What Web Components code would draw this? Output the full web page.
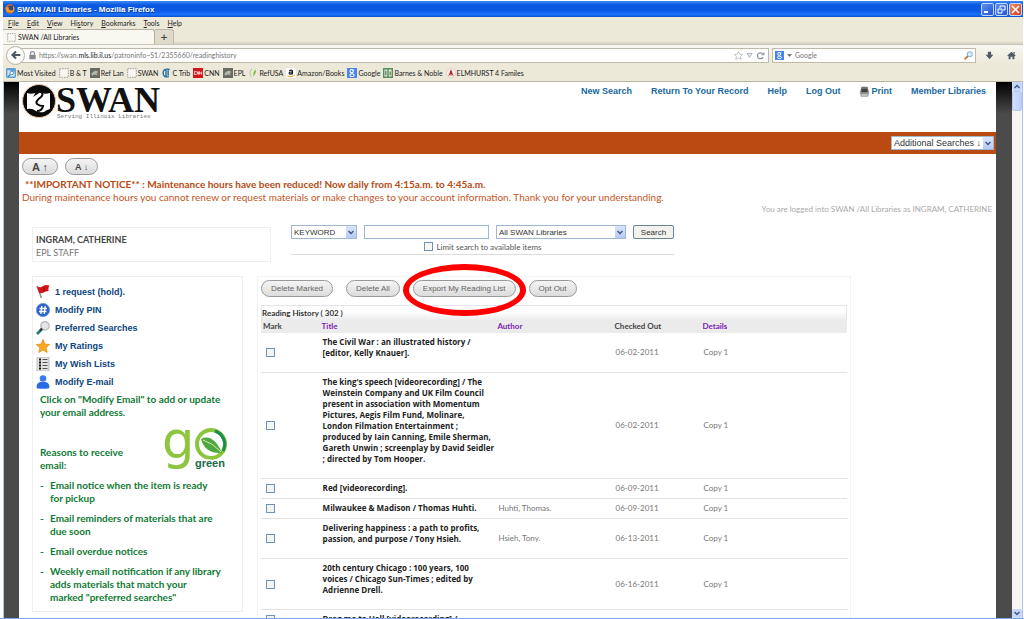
<!DOCTYPE html>
<html lang="en">
<head>
<meta charset="utf-8">
<title>SWAN /All Libraries</title>
<style>
  html, body { height: 100%; }
  body {
    margin: 0;
    overflow: hidden;
    background: #fff;
    font-family: Lato, "Noto Sans", sans-serif;
    font-size: 9px;
  }
</style>
</head>
<body>
<browser-window>
  <catalog-page></catalog-page>
</browser-window>

<script>
/* every element below only fills its shadow root from render() */
class BaseElement extends HTMLElement {
  constructor() {
    super();
    this.attachShadow({ mode: "open" });
  }

  connectedCallback() {
    this.shadowRoot.innerHTML = this.render();
  }
}

/* ================= ICONS ================= */
const dotted = `<rect x="1" y="1" width="12" height="12" fill="#f8f7f2" stroke="#777" stroke-dasharray="2 1.5"/>`;
const photo = `<rect width="14" height="14" fill="#686b62"/><path d="M2 8q5-7 10-2l-3 1 2 3-5-1-3 2z" fill="#b5b8ae"/>`;

const ICONS = {
  firefox: `<circle cx="7" cy="7" r="6.5" fill="#e66a13"/><circle cx="8" cy="6" r="4" fill="#34427f"/><path d="M1 4l2 1 3 0-1 2 3 2 3-1-2 4-6-1-2-4z" fill="#f59a22"/><path d="M12 4q2 5-3 8" stroke="#ffcf4a" fill="none"/>`,
  page: dotted,
  photo: photo,
  folder: `<rect width="14" height="14" rx="2" fill="#5e9fd4"/><path d="M2 3h4l1 2h5v7H2z" fill="#cfe6f7"/><circle cx="8" cy="7" r="2.5" fill="#fff" stroke="#2b6ca8"/><path d="M6 9l-3 3" stroke="#2b6ca8" stroke-width="1.5"/>`,
  trib: `<path d="M12 2Q3 0 3 7t8 5M7 1v12M10 3v8" stroke="#1f6fa8" stroke-width="2" fill="none"/>`,
  cnn: `<rect width="14" height="14" fill="#d3161b"/><path d="M5 5H2v4h3M6 9V5l2 4V5M9 9V5l3 4V5" stroke="#fff" fill="none"/>`,
  refusa: `<path d="M6 1Q0 6 5 13" stroke="#c2c6bb" stroke-width="1.5" fill="none"/><path d="M10 2q3 4-3 10l1-6z" fill="#7fbd3c"/>`,
  amazon: `<rect width="14" height="14" rx="2" fill="#fff"/><path d="M4.500 4q3-2 4.500 0v5M9 5.500q-5 0-4.500 2t4.500 0" stroke="#222" stroke-width="1.800" fill="none"/><path d="M2 11q5 3 10-1" stroke="#f29a1f" stroke-width="1.500" fill="none"/>`,
  google: `<rect width="14" height="14" fill="#4a83f0"/><circle cx="6.500" cy="4.500" r="2.300" fill="none" stroke="#fff" stroke-width="1.500"/><ellipse cx="7" cy="10" rx="3" ry="2" fill="none" stroke="#fff" stroke-width="1.500"/><path d="M7 3h3" stroke="#fff"/>`,
  noble: `<rect width="14" height="14" fill="#5c8a5d"/><path d="M2 2h4v10H2zM8 2h4v10H8z" fill="#e8efe4"/><path d="M4 4v6M10 5v5" stroke="#3d6b41" stroke-width="1.500"/>`,
  elmhurst: `<circle cx="7" cy="7" r="6.500" fill="#f6efe9" stroke="#ddc8c4"/><path d="M3 12L7 2l4 10-4-4z" fill="#c1272d"/><path d="M7 3v8" stroke="#8b1519"/>`,
  back: `<path d="M7 2L2 7l5 5M2.500 7H13" stroke="#4d5560" stroke-width="2.800" fill="none"/>`,
  lock: `<rect x="2" y="6" width="10" height="7" rx="1" fill="#8a8a8a"/><path d="M4 6V4q0-3 3-3t3 3v2" stroke="#8a8a8a" stroke-width="1.800" fill="none"/>`,
  star: `<path d="M7 1l2 4 4.500.5-3.300 3 1 4.500L7 10.800 2.800 13l1-4.500L.5 5.500 5 5z" fill="#fff" stroke="#a5a5a5"/>`,
  caret: `<path d="M3 4h8L7 10z" fill="#e7ebee" stroke="#8d99a5"/>`,
  smallcaret: `<path d="M3 5h8l-4 4z" fill="#666"/>`,
  reload: `<path d="M11 9.500A4.600 4.600 0 1 1 10 4" stroke="#8c96a0" stroke-width="2" fill="none"/><path d="M8 6.500h5v-5z" fill="#8c96a0"/>`,
  find: `<circle cx="9" cy="5" r="4" fill="#d9effb" stroke="#6d9cc4" stroke-width="1.300"/><path d="M6 8l-5 5" stroke="#b36f41" stroke-width="2.400"/>`,
  download: `<path d="M4.500 1h5v5H13l-6 7-6-7h3.500z" fill="#515a64"/>`,
  home: `<path d="M7 1l6.500 6-1 1-1-.7V13H8.500V9h-3v4h-3V7.300l-1 .7-1-1zM10 1.500h2V5l-2-2z" fill="#515a64"/>`,
  printer: `<path d="M3 1h8l1 5H2z" fill="#6f7471"/><rect x="1" y="5" width="12" height="6" rx="2" fill="#9b9f9c"/><path d="M3 4h8v4H3z" fill="#3e4340"/><path d="M2.500 10h9v3h-9z" fill="#d4d6d4" stroke="#888"/>`,
  flag: `<path d="M1 1l4.500 12" stroke="#8d8d8d" stroke-width="1.500"/><path d="M1 1.500q4 1.500 6-.3t6.500-.7q-1.500 2-1 5.500-3 0-5 1.500T3 7.500z" fill="#d2161a"/><path d="M7 1.300l2 4.500" stroke="#8f0c10"/>`,
  hash: `<circle cx="7" cy="7" r="6.600" fill="#2a62cc" stroke="#6f9ae0"/><path d="M5.800 3l-1 8M9.200 3l-1 8M3.500 5.500h7.500M3 8.500h7.500" stroke="#fff" stroke-width="1.300"/>`,
  lens: `<circle cx="9" cy="4.800" r="4.200" fill="#e3e6e8" stroke="#b4b4b4" stroke-width="1.200"/><path d="M6 8l-5 5" stroke="#23797c" stroke-width="2.600"/><path d="M6 7.500l-2 2" stroke="#333" stroke-width="2"/>`,
  rating: `<path d="M7 .5l2 4.600 4.700.4-3.500 3.200 1 4.800L7 11l-4.200 2.500 1-4.800L.3 5.500 5 5.100z" fill="#f7a823" stroke="#e98b16" stroke-width=".7"/>`,
  list: `<rect x="1" y="0" width="12" height="14" fill="#e4e4e4" stroke="#bbb"/><path d="M3 2.500h2M3 5.500h2M3 8.500h2M3 11.500h2" stroke="#111" stroke-width="2"/><path d="M6.500 2.500h5M6.500 5.500h5M6.500 8.500h5M6.500 11.500h5" stroke="#555"/>`,
  person: `<circle cx="7" cy="3.500" r="3.300" fill="#3a7bf2"/><path d="M.8 13.300q-1-5.500 4-6.300h4.400q5 .8 4 6.300-6.200 1-12.400 0z" fill="#2c6be6"/>`
};

class UiIcon extends BaseElement {
  render() {
    return `
      <style>
        :host { display: inline-block; flex: none; width: 14px; height: 14px; }
        svg { display: block; width: 100%; height: 100%; }
      </style>
      <svg viewBox="0 0 14 14" aria-hidden="true">${ICONS[this.getAttribute("name")]}</svg>
    `;
  }
}

/* ================= XP STYLE CONTROLS ================= */
class XpSelect extends BaseElement {
  render() {
    return `
      <style>
        :host { display: grid; box-sizing: border-box; height: 14px; border: 1px solid #9db8d2; background: #fff; font-size: 8px; }
        select, .arrow { grid-area: 1 / 1; }
        select {
          appearance: none;
          min-width: 0;
          margin: 0;
          padding: 0 10px 0 2px;
          border: 0;
          background: none;
          color: #333;
          font: inherit;
          font-family: "Liberation Sans", sans-serif;
        }
        .arrow {
          display: grid;
          place-items: center;
          justify-self: end;
          width: 10px;
          background: linear-gradient(#dbe6fd, #b5c9f7);
          pointer-events: none;
        }
      </style>
      <select aria-label="${this.getAttribute("label")}"><option>${this.getAttribute("value")}</option></select>
      <span class="arrow"><svg width="6" height="5" viewBox="0 0 6 5"><path d="M.5 1L3 3.500 5.500 1" stroke="#44597f" stroke-width="1.500" fill="none"/></svg></span>
    `;
  }
}

class PillButton extends BaseElement {
  render() {
    return `
      <style>
        :host { display: inline-block; font-size: 8px; }
        button {
          display: block;
          height: 17px;
          padding: 0 9px;
          border: 1px solid #999;
          border-radius: 9px;
          background: linear-gradient(#f4f4f4, #dcdcdc);
          color: #666;
          font: inherit;
          font-family: "Liberation Sans", sans-serif;
          white-space: nowrap;
        }
        :host([bold]) button { color: #444; font-weight: bold; }
      </style>
      <button type="button"><slot></slot></button>
    `;
  }
}

/* red ellipse drawn over whatever is slotted */
class RedRing extends BaseElement {
  render() {
    return `
      <style>
        :host { display: block; position: relative; }
        .ring {
          position: absolute;
          inset: -16px -10px -19px;
          border: 6px solid #fe0000;
          border-radius: 50%;
          pointer-events: none;
        }
      </style>
      <slot></slot>
      <div class="ring"></div>
    `;
  }
}

/* ================= BROWSER CHROME ================= */
class BrowserWindow extends BaseElement {
  render() {
    return `
      <style>
        :host {
          display: flex;
          flex-direction: column;
          box-sizing: border-box;
          height: 100vh;
          padding: 1px 1px 0 3px;
          border-bottom: 1px solid #7ba7ee;
        }
        .view { display: flex; flex: 1; min-height: 0; border-left: 1px solid #a9c4ee; border-right: 1px solid #a9c4ee; }
        .page { flex: 1; min-width: 0; overflow: hidden; }
      </style>
      <title-bar></title-bar>
      <menu-bar></menu-bar>
      <tab-strip></tab-strip>
      <nav-bar></nav-bar>
      <bookmark-bar></bookmark-bar>
      <div class="view">
        <div class="page"><slot></slot></div>
        <scroll-rail></scroll-rail>
      </div>
    `;
  }
}

class TitleBar extends BaseElement {
  render() {
    return `
      <style>
        :host {
          display: flex;
          align-items: center;
          height: 16px;
          padding: 0 1px 0 2px;
          background: linear-gradient(#3c8af5, #0a58de 25%, #0b5ae8 60%, #1872fb 85%, #0d4fcb);
          color: #fff;
          font: bold 8px "Liberation Sans", sans-serif;
        }
        ui-icon { width: 10px; height: 10px; margin-right: 2px; }
        .title { flex: 1; text-shadow: 1px 1px #0b3b9c; }
        .buttons { display: flex; gap: 1px; }
        button {
          display: grid;
          place-items: center;
          width: 13px;
          height: 13px;
          padding: 0;
          border: 1px solid #c5d7f8;
          border-radius: 2px;
          background: linear-gradient(135deg, #5d8ff0, #2456cf);
        }
        .close { background: linear-gradient(135deg, #ef8a69, #d1401b); }
        svg { width: 9px; height: 9px; fill: none; stroke: #fff; }
      </style>
      <ui-icon name="firefox"></ui-icon>
      <span class="title">SWAN /All Libraries - Mozilla Firefox</span>
      <div class="buttons">
        <button type="button" aria-label="Minimize"><svg viewBox="0 0 9 9"><path d="M1 7h4" stroke-width="2"/></svg></button>
        <button type="button" aria-label="Restore"><svg viewBox="0 0 9 9"><path d="M3 3V1h5v4H6M1 4h4v4H1z"/></svg></button>
        <button type="button" class="close" aria-label="Close"><svg viewBox="0 0 9 9"><path d="M1 1l7 7M8 1L1 8" stroke-width="1.500"/></svg></button>
      </div>
    `;
  }
}

class MenuBar extends BaseElement {
  render() {
    return `
      <style>
        :host { display: flex; gap: 8px; height: 12px; padding-left: 5px; background: #ece9d8; color: #222; font-size: 7px; line-height: 12px; }
      </style>
      ${["File", "Edit", "View", "History", "Bookmarks", "Tools", "Help"].map(this.item).join("")}
    `;
  }

  item(text) {
    // the access key is the first letter, except in History
    const at = text === "History" ? 2 : 0;
    return `<span>${text.slice(0, at)}<u>${text[at]}</u>${text.slice(at + 1)}</span>`;
  }
}

class TabStrip extends BaseElement {
  render() {
    return `
      <style>
        :host { display: flex; box-sizing: border-box; height: 16px; border-bottom: 1px solid #c9c6b8; background: linear-gradient(#ece9d8 80%, #d4d1c1); color: #222; font-size: 7px; }
        .tab { display: flex; align-items: center; gap: 2px; box-sizing: border-box; width: 152px; padding-left: 4px; border: 1px solid #b4b1a3; border-width: 1px 1px 0 0; border-radius: 0 3px 0 0; background: #f8f7f0; }
        ui-icon { width: 9px; height: 9px; }
        button { width: 19px; padding: 0; border: 1px solid #bcb9ab; border-width: 1px 1px 0 0; border-radius: 0 3px 0 0; background: #dedbcc; color: #444; font: bold 9px "DejaVu Sans", sans-serif; }
      </style>
      <div class="tab"><ui-icon name="page"></ui-icon>SWAN /All Libraries</div>
      <button type="button" aria-label="New tab">+</button>
    `;
  }
}

class NavBar extends BaseElement {
  render() {
    return `
      <style>
        :host { display: flex; align-items: center; height: 20px; padding: 0 7px 0 3px; background: linear-gradient(#f8f7f1, #ece9d8); color: #777; font-size: 7px; }
        ui-icon { width: 9px; height: 9px; }
        button { display: grid; place-items: center; padding: 0; border: 0; background: none; }
        .back { z-index: 1; width: 19px; height: 19px; margin-right: -6px; border: 1px solid #b5b3a8; border-radius: 50%; background: #fbfbf8; }
        .back ui-icon { width: 10px; height: 10px; }
        .field { display: flex; align-items: center; box-sizing: border-box; height: 15px; border: 1px solid #bdbaa9; background: #fff; }
        .url { flex: 1; gap: 2px; padding: 0 3px 0 8px; }
        .address { flex: 1; }
        .address b { color: #222; font-weight: normal; }
        .search { gap: 1px; width: 204px; margin: 0 9px 0 3px; padding: 0 2px; }
        .search input { flex: 1; min-width: 0; padding: 0; border: 0; background: none; color: #777; font: inherit; }
        .search input::placeholder { color: #777; }
        .tools { display: flex; gap: 13px; }
      </style>
      <button type="button" class="back" aria-label="Back"><ui-icon name="back"></ui-icon></button>
      <div class="field url">
        <ui-icon name="lock"></ui-icon>
        <span class="address">https://swan.<b>mls.lib.il.us</b>/patroninfo~S1/2355660/readinghistory</span>
        <ui-icon name="star"></ui-icon>
        <ui-icon name="caret"></ui-icon>
        <ui-icon name="reload"></ui-icon>
      </div>
      <div class="field search">
        <ui-icon name="google"></ui-icon>
        <ui-icon name="smallcaret"></ui-icon>
        <input type="text" aria-label="Web search" placeholder="Google">
        <ui-icon name="find"></ui-icon>
      </div>
      <div class="tools">
        <button type="button" aria-label="Downloads"><ui-icon name="download"></ui-icon></button>
        <button type="button" aria-label="Home"><ui-icon name="home"></ui-icon></button>
      </div>
    `;
  }
}

class BookmarkBar extends BaseElement {
  render() {
    const marks = [
      ["folder", "Most Visited"], ["page", "B &amp; T"], ["photo", "Ref Lan"], ["page", "SWAN"],
      ["trib", "C Trib"], ["cnn", "CNN"], ["photo", "EPL"], ["refusa", "RefUSA"],
      ["amazon", "Amazon/Books"], ["google", "Google"], ["noble", "Barnes &amp; Noble"],
      ["elmhurst", "ELMHURST 4 Familes"]
    ];
    return `
      <style>
        :host { display: flex; align-items: center; gap: 3px; box-sizing: border-box; height: 17px; padding-left: 3px; border-bottom: 1px solid #b9b6a6; background: #ece9d8; font-size: 7px; }
        a { display: flex; align-items: center; gap: 1px; color: #222; text-decoration: none; white-space: nowrap; }
        ui-icon { width: 10px; height: 10px; }
      </style>
      ${marks.map(([icon, text]) => `<a href="#"><ui-icon name="${icon}"></ui-icon>${text}</a>`).join("")}
    `;
  }
}

class ScrollRail extends BaseElement {
  render() {
    return `
      <style>
        :host { display: flex; flex-direction: column; width: 10px; background: #f7f6f1; }
        .cap { display: grid; place-items: center; height: 9px; border-radius: 2px; background: #c6d5fb; }
        .thumb { height: 18px; border: 1px solid #b3c6f5; border-radius: 2px; background: linear-gradient(90deg, #d2dffd, #bccefa); }
        .gap { flex: 1; }
        path { stroke: #44597f; stroke-width: 1.5; fill: none; }
      </style>
      <div class="cap"><svg width="6" height="5"><path d="M.5 4L3 1.500 5.500 4"/></svg></div>
      <div class="thumb"></div>
      <div class="gap"></div>
      <div class="cap"><svg width="6" height="5"><path d="M.5 1L3 3.500 5.500 1"/></svg></div>
    `;
  }
}

/* ================= CATALOG PAGE ================= */
class CatalogPage extends BaseElement {
  render() {
    return `
      <style>
        :host { display: block; padding: 0 16px 0 15px; background: linear-gradient(#000, #4b4b4b 32px); }
        .sheet { background: #fff; }
        .bar { display: flex; align-items: center; justify-content: flex-end; height: 22px; padding-right: 2px; background: #ba4a12; }
        .bar xp-select { font-size: 9px; width: 103px; }
        .sizes { display: flex; gap: 7px; padding: 4px 3px 0; }
        .sizes pill-button { font-size: 9px; }
        .sizes .larger { font-size: 11px; }
        .notice { margin: 0; padding: 3px 3px 0; color: #c4551f; font-size: 10px; line-height: 13px; }
        .notice b { padding-left: 3px; color: #b84a12; }
        .login { margin: 0 4px 0 0; color: #aaa; font-size: 8px; line-height: 11px; text-align: right; }
        .intro { display: flex; align-items: flex-start; gap: 20px; padding: 12px 13px 14px; }
        .patron { box-sizing: border-box; width: 239px; height: 35px; padding: 5px 3px; border: 1px solid #efefef; color: #777; line-height: 13px; }
        .patron b { display: block; color: #444; }
        .columns { display: flex; align-items: flex-start; gap: 14px; padding: 0 13px; }
        reading-history { flex: 1; margin-right: 132px; }
      </style>
      <div class="sheet">
        <site-header></site-header>
        <div class="bar"><xp-select label="Additional searches" value="Additional Searches ↓"></xp-select></div>
        <div class="sizes"><pill-button bold class="larger">A ↑</pill-button><pill-button bold>A ↓</pill-button></div>
        <p class="notice"><b>**IMPORTANT NOTICE** : Maintenance hours have been reduced! Now daily from 4:15a.m. to 4:45a.m.</b><br>
        During maintenance hours you cannot renew or request materials or make changes to your account information. Thank you for your understanding.</p>
        <p class="login">You are logged into SWAN /All Libraries as INGRAM, CATHERINE</p>
        <div class="intro">
          <div class="patron"><b>INGRAM, CATHERINE</b>EPL STAFF</div>
          <search-form></search-form>
        </div>
        <div class="columns">
          <account-panel></account-panel>
          <reading-history></reading-history>
        </div>
      </div>
    `;
  }
}

class SiteHeader extends BaseElement {
  render() {
    return `
      <style>
        :host { display: flex; justify-content: space-between; align-items: flex-start; box-sizing: border-box; height: 50px; padding: 2px 10px 0 3px; }
        .logo { display: flex; color: #111; }
        .swan { margin: 0; font: bold 36px/32px "Liberation Serif", serif; }
        .tag { margin: -2px 0 0 1px; color: #777; font: 6px/6px "Liberation Mono", monospace; }
        nav { display: flex; gap: 19px; font: bold 9px/14px "Liberation Sans", sans-serif; }
        a { display: flex; align-items: center; gap: 1px; color: #20699f; text-decoration: none; }
        ui-icon { width: 11px; height: 11px; }
      </style>
      <div class="logo">
        <svg width="34" height="34" viewBox="0 0 34 34" aria-hidden="true">
          <circle cx="17" cy="17" r="16.500" fill="#0a0a0a" stroke="#ecc9ae"/>
          <path d="M5 9q5 2 11-1 6 3 12 1v16q-4 1-6 3-5 1-8-1-4-3-9-2z" fill="#fff"/>
          <path d="M14 10q2-3 5-2 3 2 0 5-6 4-4 7 3 2 6 2-1 5-6 5" fill="none" stroke="#0a0a0a" stroke-width="2"/>
          <path d="M11 13l3-5 3 1z" fill="#0a0a0a"/>
        </svg>
        <div>
          <p class="swan">SWAN</p>
          <p class="tag">Serving Illinois Libraries</p>
        </div>
      </div>
      <nav>
        <a href="#">New Search</a>
        <a href="#">Return To Your Record</a>
        <a href="#">Help</a>
        <a href="#">Log Out</a>
        <a href="#"><ui-icon name="printer"></ui-icon>Print</a>
        <a href="#">Member Libraries</a>
      </nav>
    `;
  }
}

class SearchForm extends BaseElement {
  render() {
    return `
      <style>
        :host { display: block; margin-top: -2px; border-bottom: 1px solid #ddd; }
        form { margin: 0; }
        .row { display: flex; align-items: center; gap: 7px; }
        .type { width: 66px; }
        .scope { width: 130px; }
        .query { box-sizing: border-box; width: 125px; height: 14px; margin: 0; padding: 0 2px; border: 1px solid #9db8d2; font-size: 8px; }
        button { width: 41px; height: 14px; padding: 0; border: 1px solid #6b8499; border-radius: 2px; background: #f2f1ec; color: #333; font: 8px "Liberation Sans", sans-serif; }
        .limit { display: flex; align-items: center; justify-content: center; gap: 4px; height: 15px; color: #555; font-size: 8px; }
        .limit input { appearance: none; box-sizing: border-box; width: 9px; height: 9px; margin: 0; border: 1px solid #6f93b5; background: #f6f6f3; }
      </style>
      <form>
        <div class="row">
          <xp-select class="type" label="Search type" value="KEYWORD"></xp-select>
          <input class="query" type="text" aria-label="Search for">
          <xp-select class="scope" label="Search scope" value="All SWAN Libraries"></xp-select>
          <button type="button">Search</button>
        </div>
        <label class="limit"><input type="checkbox">Limit search to available items</label>
      </form>
    `;
  }
}

class AccountPanel extends BaseElement {
  render() {
    const links = [
      ["flag", "1 request (hold)."], ["hash", "Modify PIN"], ["lens", "Preferred Searches"],
      ["rating", "My Ratings"], ["list", "My Wish Lists"], ["person", "Modify E-mail"]
    ];
    return `
      <style>
        :host { display: block; box-sizing: border-box; width: 211px; padding: 6px 3px 7px; border: 1px solid #efefef; color: #0f7a35; font-size: 10px; font-weight: bold; line-height: 13px; }
        a { display: flex; align-items: center; gap: 5px; height: 18px; color: #0b4580; font-size: 9px; font-family: "Liberation Sans", sans-serif; text-decoration: none; }
        .tip { margin: 2px 4px 8px; }
        .green { display: flex; align-items: flex-end; justify-content: space-between; margin: 0 10px 0 4px; }
        .green p { margin: 0; }
        .green svg { display: block; overflow: visible; }
        ul { margin: 7px 4px 0; padding: 0; list-style: none; }
        li { display: flex; margin-bottom: 7px; white-space: nowrap; }
        li:last-child { margin-bottom: 0; }
        li::before { content: "-"; flex: none; width: 10px; }
      </style>
      ${links.map(([icon, text]) => `<a href="#"><ui-icon name="${icon}"></ui-icon>${text}</a>`).join("")}
      <p class="tip">Click on "Modify Email" to add or update<br>your email address.</p>
      <div class="green">
        <p>Reasons to receive<br>email:</p>
        <svg width="64" height="45" viewBox="0 0 64 45" role="img" aria-label="go green">
          <text x="-3" y="31" font-family="DejaVu Sans" font-weight="400" font-size="51" fill="#8cc63f">g</text>
          <circle cx="46" cy="17" r="14" fill="#fff" stroke="#8cc63f" stroke-width="4"/>
          <path d="M50 4A14 14 0 0 1 58 24" fill="none" stroke="#1b8d4d" stroke-width="3"/>
          <path d="M36 12q12-6 21 14-17 1-21-14z" fill="#4fa83d"/>
          <path d="M38 13q10 3 18 12" fill="none" stroke="#d5efb8"/>
          <text x="30" y="40" font-family="Liberation Sans" font-weight="700" font-size="11" fill="#176b47" stroke="#fff" stroke-width="3" paint-order="stroke">green</text>
        </svg>
      </div>
      <ul>
        <li>Email notice when the item is ready<br>for pickup</li>
        <li>Email reminders of materials that are<br>due soon</li>
        <li>Email overdue notices</li>
        <li>Weekly email notification if any library<br>adds materials that match your<br>marked "preferred searches"</li>
      </ul>
    `;
  }
}

/* "|" marks a line break inside a title */
const ITEMS = [
  { title: "The Civil War : an illustrated history /|[editor, Kelly Knauer].", author: "", date: "06-02-2011" },
  { title: "The king's speech [videorecording] / The|Weinstein Company and UK Film Council|present in association with Momentum|Pictures, Aegis Film Fund, Molinare,|London Filmation Entertainment ;|produced by Iain Canning, Emile Sherman,|Gareth Unwin ; screenplay by David Seidler|; directed by Tom Hooper.", author: "", date: "06-02-2011" },
  { title: "Red [videorecording].", author: "", date: "06-09-2011" },
  { title: "Milwaukee &amp; Madison / Thomas Huhti.", author: "Huhti, Thomas.", date: "06-09-2011" },
  { title: "Delivering happiness : a path to profits,|passion, and purpose / Tony Hsieh.", author: "Hsieh, Tony.", date: "06-13-2011" },
  { title: "20th century Chicago : 100 years, 100|voices / Chicago Sun-Times ; edited by|Adrienne Drell.", author: "", date: "06-16-2011" },
  { title: "Drag me to Hell [videorecording] /", author: "", date: "" }
];

class ReadingHistory extends BaseElement {
  render() {
    return `
      <style>
        :host { display: block; padding: 3px 3px 0; border: 1px solid #f3f3f3; font-size: 8px; line-height: 11px; }
        .actions { display: flex; gap: 13px; margin-bottom: 8px; }
        table { width: 100%; border-collapse: collapse; table-layout: fixed; }
        caption { box-sizing: border-box; height: 15px; padding: 2px 0; border: 1px solid #e3e5e8; border-bottom: 0; background: linear-gradient(#fff 40%, #ececec); color: #333; font-weight: bold; text-align: left; }
        th { height: 13px; padding: 0 2px; background: #ebebeb; color: #444; text-align: left; }
        th a { color: #7d22b5; text-decoration: none; }
        td { height: 11px; padding: 4px 4px 4px 3px; border-bottom: 1px solid #e3e3e3; color: #777; }
        td.title { padding-top: 3px; padding-bottom: 5px; color: #222; font-family: "Open Sans", sans-serif; font-weight: bold; white-space: nowrap; vertical-align: top; }
        td.long { padding-bottom: 14px; }
        td input { appearance: none; display: block; box-sizing: border-box; width: 9px; height: 9px; margin: 0 0 0 2px; border: 1px solid #6f93b5; background: #f3f3ef; }
      </style>
      <div class="actions">
        <pill-button>Delete Marked</pill-button>
        <pill-button>Delete All</pill-button>
        <red-ring><pill-button>Export My Reading List</pill-button></red-ring>
        <pill-button>Opt Out</pill-button>
      </div>
      <table>
        <caption>Reading History ( 302 )</caption>
        <colgroup><col style="width:10%"><col style="width:30%"><col style="width:20%"><col style="width:15%"><col></colgroup>
        <thead>
          <tr><th>Mark</th><th><a href="#">Title</a></th><th><a href="#">Author</a></th><th>Checked Out</th><th><a href="#">Details</a></th></tr>
        </thead>
        <tbody>${ITEMS.map(this.row).join("")}</tbody>
      </table>
    `;
  }

  row(item) {
    const lines = item.title.split("|");
    return `
      <tr>
        <td><input type="checkbox" aria-label="Mark ${lines[0]}"></td>
        <td class="title${lines.length > 1 ? " long" : ""}">${lines.join("<br>")}</td>
        <td>${item.author}</td>
        <td>${item.date}</td>
        <td>${item.date ? "Copy 1" : ""}</td>
      </tr>
    `;
  }
}

customElements.define("ui-icon", UiIcon);
customElements.define("xp-select", XpSelect);
customElements.define("pill-button", PillButton);
customElements.define("red-ring", RedRing);
customElements.define("title-bar", TitleBar);
customElements.define("menu-bar", MenuBar);
customElements.define("tab-strip", TabStrip);
customElements.define("nav-bar", NavBar);
customElements.define("bookmark-bar", BookmarkBar);
customElements.define("scroll-rail", ScrollRail);
customElements.define("site-header", SiteHeader);
customElements.define("search-form", SearchForm);
customElements.define("account-panel", AccountPanel);
customElements.define("reading-history", ReadingHistory);
customElements.define("catalog-page", CatalogPage);
customElements.define("browser-window", BrowserWindow);
</script>
</body>
</html>
